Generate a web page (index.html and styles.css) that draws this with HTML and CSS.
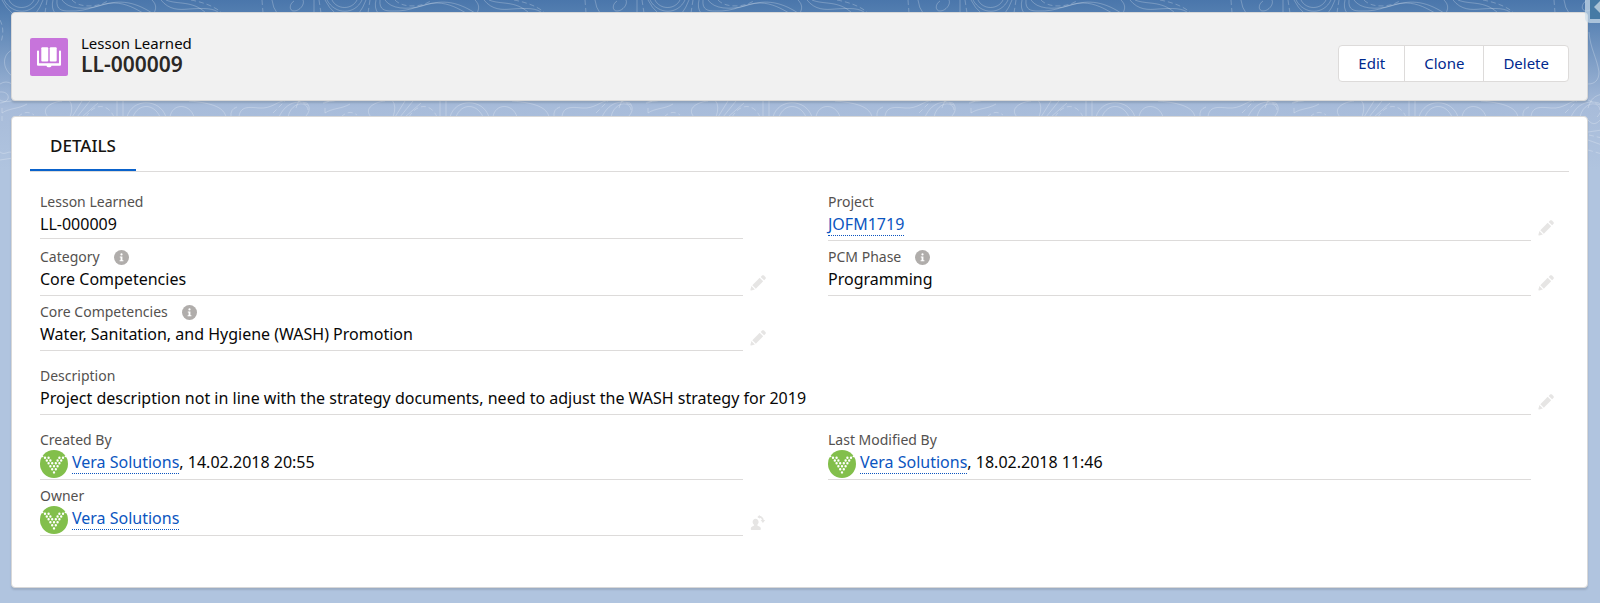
FILE: index.html
```html
<!DOCTYPE html>
<html lang="en">
<head>
    <meta charset="UTF-8">
    <meta name="viewport" content="width=device-width, initial-scale=1.0">
    <title>LL-000009</title>
    <link rel="stylesheet" href="styles.css">
</head>
<body>

    <!-- shared icons -->
    <svg class="sprite" aria-hidden="true">
        <symbol id="info" viewBox="0 0 15 15">
            <circle cx="7.5" cy="7.5" r="7.5" fill="#b0adab"/>
            <circle cx="7.5" cy="4.4" r="1.1" fill="#fff"/>
            <path d="M5.8 6.4h2.6v3.8h1v1.1H5.6v-1.1h1V7.5h-.8z" fill="#fff"/>
        </symbol>
        <symbol id="pencil" viewBox="0 0 16 16">
            <path d="M.4 14.8l1-3.7 3.5 3.5-3.7.9c-.6.1-1-.2-.8-.7z"/>
            <path d="M2.3 10.2l7.4-7.4 3.5 3.5-7.4 7.4z"/>
            <path d="M10.7 1.9l1.3-1.3c.6-.6 1.4-.6 2 0l1.4 1.4c.6.6.6 1.400 0 2l-1.300 1.300z"/>
        </symbol>
        <symbol id="change-owner" viewBox="0 0 16 16">
            <path d="M5.6 3.8c1.8 0 3 1.4 3 3.1 0 1.2-.6 2.2-1.3 2.8v.9l2.500 1.200c.7.4 1 .9 1 1.600v.8c0 .4-.3.8-.8.8H1.600c-.5 0-.8-.4-.8-.8v-.8c0-.7.3-1.200 1-1.600l2.300-1.200v-.9C3.200 9.100 2.600 8.100 2.600 6.900c0-1.700 1.200-3.100 3-3.100z"/>
            <path d="M8.4 1.800c2.600-.3 4.400 1.300 4.500 3.800" fill="none" stroke="#e6e5e4" stroke-width="1.8"/>
            <path d="M10.6 5.100h4.600l-2.300 3z"/>
            <path d="M9.8 0v3.800L7.300 1.900z"/>
        </symbol>
        <symbol id="avatar" viewBox="0 0 28 28">
            <circle cx="14" cy="14" r="14" fill="#82bf4b"/>
            <path d="M14 22.4h0M12.2 19.2h0M15.8 19.2h0M10.4 16.2h0M14 16.2h0M17.600 16.200h0M8.600 13.300h0M12.200 13.300h0M15.800 13.300h0M19.400 13.300h0M6.800 10.500h0M10.400 10.500h0M17.600 10.500h0M21.200 10.500h0M5 7.800h0M8.600 7.800h0M19.400 7.800h0M23 7.800h0" fill="none" stroke="#fff" stroke-width="2.4" stroke-linecap="round"/>
            <path d="M2.600 6.400h0M25.400 6.400h0" fill="none" stroke="#fff" stroke-width="1.6" stroke-linecap="round"/>
        </symbol>
    </svg>

    <!-- contour lines behind the cards -->
    <svg class="contours" aria-hidden="true">
        <defs>
            <pattern id="topo" x="-86" y="0" width="323" height="170" patternUnits="userSpaceOnUse">
                <g fill="none" stroke="#fff" stroke-opacity=".24">
                    <path d="M35 0Q36 8 40 13M57 1C52 4 52 11 57 11C63 11 68 4 66 0M77 0V13M88 0Q92 8 98 13M95 0C100 10 115 10 120 0M90 0C98 15 118 15 125 0M129 0Q126 8 122 13M139 0Q137 8 141 13"/>
                    <path d="M143 0C142 10 148 11 155 11C175 12 185 3 200 3C212 3 222 9 229 13M148 0C154 9 170 10 185 6C203 0 218 0 238 13M238 0C243 5 242 9 240 13M247 0C255 10 265 10 275 9C290 8 300 8 305 13M252 0C264 5 278 0 292 13"/>
                    <path d="M2 117C3 106 12 107 22 108C35 109 40 101 50 100M42 117C48 104 58 100 70 103C74 108 72 113 68 117M51 117C54 102 70 100 71 110M88 113C95 108 105 109 113 104M86 100C90 103 98 101 100 100M134 117C126 108 138 102 148 101M155 100Q160 106 156 117"/>
                    <path d="M158 117L168 101M163 117L176 101M168 117L184 103M203 100V117M209 100V117M213 117C218 98 246 98 252 117M219 117C224 103 240 103 246 117M256 117C258 103 276 103 280 117M275 101C300 103 310 108 312 117M323 107Q316 109 317 117"/>
                    <path d="M98 50C88 55 88 68 98 76M86 84Q92 80 98 84M86 92C96 91 98 102 86 103M86 152C91 156 94 150 99 153M86 160L99 158M60 32C61 48 68 58 70 72C70 80 66 84 59 84M59 108C62 98 66 96 73 94M59 120C64 126 68 124 73 118M59 132L73 130M59 140L73 145"/>
                    <path d="M25 0L26 13M82 0L84 13M133 0L131 13M158 0C165 8 185 8 195 0M277 0Q298 4 308 13M36 113L48 101M104 117Q112 109 120 115M172 117C180 103 194 103 200 117M86 20Q91 30 87 42M88 108V122M59 100L73 106M59 150L73 154M60 135L73 138" stroke-dasharray="5 3"/>
                </g>
            </pattern>
        </defs>
        <rect width="100%" height="170" fill="url(#topo)"/>
    </svg>

    <main class="page">
        <header class="card record-header">
            <svg class="record-icon" viewBox="0 0 37 37" aria-hidden="true">
                <rect width="37" height="37" rx="2" fill="#c774db"/>
                <g fill="#fff">
                    <rect x="11" y="9" width="6.8" height="14" rx="1"/>
                    <rect x="19.2" y="9" width="6.8" height="14" rx="1"/>
                    <path d="M6.8 13.3c0-1.4 2-1.4 2 0v11.400h19.400V13.300c0-1.400 2-1.400 2 0v12.400c0 .8-.5 1.300-1.300 1.300h-8c-.2 1-.9 1.500-2.400 1.500s-2.200-.5-2.400-1.500h-8c-.8 0-1.300-.5-1.300-1.300z"/>
                </g>
            </svg>
            <div class="record-title">
                <p>Lesson Learned</p>
                <h1>LL-000009</h1>
            </div>
            <div class="actions">
                <button type="button">Edit</button>
                <button type="button">Clone</button>
                <button type="button">Delete</button>
            </div>
        </header>

        <section class="card">
            <nav class="tabs">
                <a href="#details" class="tab">DETAILS</a>
            </nav>

            <div class="details" id="details">
                <dl class="fields">
                    <div class="field">
                        <dt>Lesson Learned</dt>
                        <dd><div class="value readonly">LL-000009</div></dd>
                    </div>
                    <div class="field">
                        <dt>Project</dt>
                        <dd>
                            <div class="value"><a href="#">JOFM1719</a></div>
                            <button type="button" class="edit" aria-label="Edit Project"><svg><use href="#pencil"/></svg></button>
                        </dd>
                    </div>
                    <div class="field">
                        <dt>Category <svg class="info"><use href="#info"/></svg></dt>
                        <dd>
                            <div class="value">Core Competencies</div>
                            <button type="button" class="edit" aria-label="Edit Category"><svg><use href="#pencil"/></svg></button>
                        </dd>
                    </div>
                    <div class="field">
                        <dt>PCM Phase <svg class="info"><use href="#info"/></svg></dt>
                        <dd>
                            <div class="value">Programming</div>
                            <button type="button" class="edit" aria-label="Edit PCM Phase"><svg><use href="#pencil"/></svg></button>
                        </dd>
                    </div>
                    <div class="field">
                        <dt>Core Competencies <svg class="info"><use href="#info"/></svg></dt>
                        <dd>
                            <div class="value">Water, Sanitation, and Hygiene (WASH) Promotion</div>
                            <button type="button" class="edit" aria-label="Edit Core Competencies"><svg><use href="#pencil"/></svg></button>
                        </dd>
                    </div>
                </dl>

                <dl class="fields">
                    <div class="field wide">
                        <dt>Description</dt>
                        <dd>
                            <div class="value">Project description not in line with the strategy documents, need to adjust the WASH strategy for 2019</div>
                            <button type="button" class="edit" aria-label="Edit Description"><svg><use href="#pencil"/></svg></button>
                        </dd>
                    </div>
                </dl>

                <dl class="fields">
                    <div class="field">
                        <dt>Created By</dt>
                        <dd>
                            <div class="value person">
                                <svg class="avatar"><use href="#avatar"/></svg>
                                <span><a href="#">Vera Solutions</a>, 14.02.2018 20:55</span>
                            </div>
                        </dd>
                    </div>
                    <div class="field">
                        <dt>Last Modified By</dt>
                        <dd>
                            <div class="value person">
                                <svg class="avatar"><use href="#avatar"/></svg>
                                <span><a href="#">Vera Solutions</a>, 18.02.2018 11:46</span>
                            </div>
                        </dd>
                    </div>
                    <div class="field">
                        <dt>Owner</dt>
                        <dd>
                            <div class="value person">
                                <svg class="avatar"><use href="#avatar"/></svg>
                                <span><a href="#">Vera Solutions</a></span>
                            </div>
                            <button type="button" class="edit" aria-label="Change Owner"><svg><use href="#change-owner"/></svg></button>
                        </dd>
                    </div>
                </dl>
            </div>
        </section>
    </main>

    <button type="button" class="corner" aria-label="Previous">
        <svg viewBox="0 0 10 18" aria-hidden="true"><path d="M10 0L4 6l6 6z" fill="#a9c3d6"/></svg>
    </button>

</body>
</html>
```
FILE: styles.css
```css
* {
    box-sizing: border-box;
}
body {
    margin: 0;
    min-height: 100vh;
    position: relative;
    font-family: "Noto Sans", "Open Sans", sans-serif;
    font-size: 16px;
    line-height: 24px;
    color: #080707;
    background: #b0c4df linear-gradient(#4a76ab 0, #5580b2 16px, #a8bcda 108px, #b0c4df 170px) no-repeat;
}
p, h1, dl, dd {
    margin: 0;
}
button {
    font: inherit;
    cursor: pointer;
}
.sprite {
    position: absolute;
    width: 0;
    height: 0;
}
.contours {
    position: absolute;
    top: 0;
    left: 0;
    width: 100%;
    height: 170px;
}
.page {
    position: relative;
    display: flex;
    flex-direction: column;
    gap: 15px;
    padding: 12px 12px 16px 11px;
}
.card {
    background: #fff;
    border: 1px solid #d8d8d8;
    border-radius: 4px;
    box-shadow: 0 2px 2px rgba(0, 0, 0, 0.12);
    padding: 0 18px;
}

/* Record header */
.record-header {
    display: flex;
    align-items: flex-start;
    background: #f1f1f1;
    padding: 21px 18px 18px;
}
.record-icon {
    width: 38px;
    height: 38px;
    margin-top: 4px;
}
.record-title {
    flex: 1;
    margin-left: 13px;
}
.record-title p {
    font-size: 15px;
    line-height: 19px;
}
.record-title h1 {
    font-size: 21px;
    font-weight: 600;
    line-height: 22px;
    color: #2b2826;
}
.actions {
    display: flex;
    margin-top: 11px;
    background: #fff;
    border: 1px solid #dddbda;
    border-radius: 4px;
}
.actions button {
    padding: 0 19px;
    border: 0;
    background: none;
    font-size: 15px;
    line-height: 35px;
    color: #00298e;
}
.actions button + button {
    border-left: 1px solid #dddbda;
}

/* Tabs */
.tabs {
    display: flex;
    border-bottom: 1px solid #dddbda;
}
.tab {
    padding: 17px 20px 11px;
    border-bottom: 2px solid #0a62cb;
    font-size: 17px;
    font-weight: 500;
    color: #161412;
    text-decoration: none;
}

/* Details */
.details {
    padding: 20px 10px 51px;
}
.fields {
    display: grid;
    grid-template-columns: 1fr 1fr;
    gap: 6px 57px;
}
.fields + .fields {
    margin-top: 15px;
}
.wide {
    grid-column: 1 / -1;
}
dt {
    display: flex;
    align-items: center;
    gap: 14px;
    font-size: 14px;
    line-height: 20px;
    color: #54514f;
}
.info {
    width: 15px;
    height: 15px;
}
dd {
    display: flex;
    align-items: flex-end;
    padding-right: 28px;
}
.value {
    flex: 1;
    padding-bottom: 4px;
    border-bottom: 1px solid #dddbda;
}
.readonly {
    padding-bottom: 2px;
}
.value a {
    color: #0b55c0;
    text-decoration: none;
    border-bottom: 1px dotted #0b55c0;
}
.person {
    display: flex;
    gap: 4px;
    padding-bottom: 1px;
}
.avatar {
    width: 28px;
    height: 28px;
}
.edit {
    width: 28px;
    margin-right: -28px;
    padding: 0 0 5px 7px;
    border: 0;
    background: none;
    line-height: 0;
    text-align: left;
}
.edit svg {
    width: 16px;
    height: 16px;
    fill: #e6e5e4;
}

/* Partly covered control in the top right corner */
.corner {
    position: absolute;
    top: 0;
    right: 0;
    width: 15px;
    height: 23px;
    padding: 0;
    border: solid rgba(205, 222, 236, 0.7);
    border-width: 0 0 4px 5px;
    border-bottom-left-radius: 5px;
    background: #457aa5;
    background-clip: padding-box;
    line-height: 0;
}
.corner svg {
    width: 10px;
    height: 18px;
}
```
